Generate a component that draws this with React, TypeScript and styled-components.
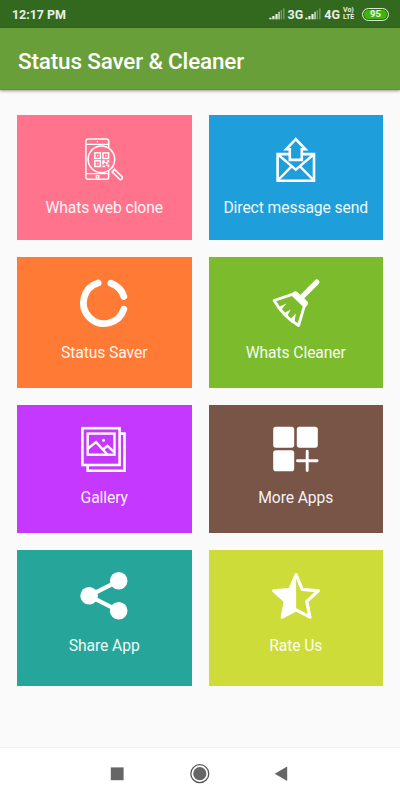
import React from "react";
import styled, { createGlobalStyle } from "styled-components";

const GlobalStyle = createGlobalStyle`
  * { box-sizing: border-box; }
  body {
    margin: 0;
    background: #fafafa;
    font-family: Roboto, "Liberation Sans", sans-serif;
  }
`;

const Screen = styled.div`
  width: 400px;
  height: 800px;
  display: flex;
  flex-direction: column;
  background: #fafafa;
  overflow: hidden;
`;

const StatusBar = styled.div`
  height: 28px;
  flex: none;
  display: flex;
  align-items: center;
  padding: 2px 11px 0 12px;
  background: #33691e;
  color: #e9f0e6;
  font-size: 12.5px;
  line-height: 14px;
  font-weight: 700;
`;

const Clock = styled.span`
  flex: 1;
  font-size: 12.5px;
  letter-spacing: -0.05px;
`;

const Network = styled.span`
  margin: 0 2px 0 3px;
`;

const SignalSvg = styled.svg`
  width: 16px;
  height: 12px;
  flex: none;
  margin-top: -2px;
`;

const Volte = styled.span`
  display: flex;
  flex-direction: column;
  width: 13px;
  margin: -2px 6px 0 1px;
  font-size: 7px;
  line-height: 7px;
`;

const VolteLine = styled.span`
  height: 7px;
  overflow: hidden;
  white-space: nowrap;
`;

const Battery = styled.span`
  width: 27px;
  height: 13px;
  display: flex;
  align-items: center;
  justify-content: center;
  margin-top: -2px;
  border: 1.5px solid #dcebd4;
  border-radius: 7px;
  background: #3fb50c;
  box-shadow: inset 0 0 0 1px #33691e;
  color: #f2fbee;
  font-size: 9.5px;
  line-height: 10px;
`;

const AppBar = styled.header`
  height: 62px;
  flex: none;
  display: flex;
  align-items: center;
  padding: 4px 18px 0;
  background: #689f38;
  border-bottom: 1px solid #5c9428;
  box-shadow: 0 1px 3px rgba(0, 0, 0, 0.4);
  color: #fff;
`;

const Title = styled.h1`
  margin: 0;
  font-size: 22.5px;
  line-height: 28px;
  font-weight: 500;
  letter-spacing: -0.17px;
  white-space: nowrap;
`;

const Grid = styled.main`
  flex: 1;
  display: grid;
  grid-template-columns: 1fr 1fr;
  grid-template-rows: 125.3px 131px 128px 136.5px;
  gap: 16.9px 17px;
  padding: 25px 17px 0;
`;

const Tile = styled.div<{ $color: string; $labelGap: number }>`
  display: flex;
  flex-direction: column;
  align-items: center;
  gap: ${(p) => p.$labelGap}px;
  padding-top: 15px;
  background: ${(p) => p.$color};
  color: #fff;
`;

const IconSvg = styled.svg`
  width: 60px;
  height: 60px;
  flex: none;
  display: block;
`;

const Label = styled.span`
  font-size: 15.7px;
  line-height: 20px;
  letter-spacing: -0.1px;
  white-space: nowrap;
  opacity: 0.93;
`;

const NavBar = styled.nav`
  height: 53px;
  flex: none;
  display: flex;
  align-items: center;
  justify-content: center;
  gap: 62px;
  border-top: 1px solid #f2f2f2;
  background: #fff;
`;

const NavSvg = styled.svg`
  width: 20px;
  height: 20px;
  display: block;
`;

const Signal = () => (
  <SignalSvg viewBox="0 0 16 12" fill="#e9f0e6">
    <rect x="0.3" y="9.7" width="2.2" height="1.6" />
    <rect x="3.3" y="8" width="2.2" height="3.3" />
    <rect x="6.4" y="6" width="2.2" height="5.3" />
    <rect x="9.4" y="3.8" width="1.3" height="7.5" />
    <rect x="11.6" y="2" width="1.5" height="9.3" opacity="0.35" />
    <rect x="14.1" y="0.3" width="1.5" height="11" opacity="0.35" />
  </SignalSvg>
);

const WebCloneIcon = () => (
  <IconSvg viewBox="0 0 60 60" fill="none" stroke="#fff" strokeWidth="1.5">
    <path d="M34.7 18V11.3a2.4 2.4 0 0 0-2.4-2.4h-18a2.4 2.4 0 0 0-2.4 2.4v35.6a2.4 2.4 0 0 0 2.4 2.4h18a2.4 2.4 0 0 0 2.4-2.4V41" />
    <path d="M11.9 14.4h22.8M11.9 43.7h22.8" strokeWidth="1.2" />
    <circle cx="23.4" cy="11.7" r="0.7" fill="#fff" stroke="none" />
    <rect x="22.2" y="45.6" width="2.6" height="2.2" strokeWidth="1.2" />
    <circle cx="27.4" cy="29.3" r="13.3" />
    <path d="M36.3 39.2l3-2.6M38.2 41.9l2.3-2.4 7.4 7a1.7 1.7 0 0 1-2.5 2.5l-7.2-7.1z" strokeWidth="1.6" />
    <g strokeWidth="1.5">
      <rect x="20.8" y="22.9" width="5.6" height="5.6" />
      <rect x="29" y="22.9" width="5.6" height="5.6" />
      <rect x="20.8" y="30.9" width="5.6" height="5.6" />
    </g>
    <g fill="#fff" stroke="none">
      <rect x="22.9" y="25" width="1.5" height="1.5" />
      <rect x="31.1" y="25" width="1.5" height="1.5" />
      <rect x="22.9" y="33" width="1.5" height="1.5" />
      <path d="M28.2 30.2h2.6v2h2v-2h2.5v2.3h-1.7v1.7h-2v-1.1h-1.8v1.4h-1.6zM28.4 35.6h3v1.7h-3zM32.2 34.4h3.1v2.9h-1.7v-1.5h-1.4z" />
    </g>
  </IconSvg>
);

const SendMessageIcon = () => (
  <IconSvg viewBox="0 0 60 60" fill="none" stroke="#fff" strokeWidth="2.6">
    <path d="M23 24.1H11.6v26.6H48V24.1H36.5" />
    <path d="M29.8 9.1L20.2 19.3h3.6v10.6h12V19.3h3.6z" />
    <path d="M12 24.5l17.8 15.2 17.8-15.2M12.2 50l13.4-13.6M47.4 50L34 36.4" strokeWidth="2.4" />
  </IconSvg>
);

const StatusIcon = () => (
  <IconSvg viewBox="0 0 60 60" fill="none" stroke="#fff" strokeWidth="6.8" strokeLinecap="round">
    <path d="M24.1 11.1A20.7 20.7 0 1 0 49.8 37.3" />
    <path d="M36.9 11.2A20.7 20.7 0 0 1 49.8 24.4" />
  </IconSvg>
);

const BroomIcon = () => (
  <IconSvg viewBox="0 0 60 60" fill="#fff">
    <path d="M50.8 10.1L34.5 26.4" stroke="#fff" strokeWidth="5.2" strokeLinecap="round" />
    <path d="M27.2 20.6q2.1-1.9 4.5.1l8.8 8.2q2 2.3.3 4.5-1.1 1.5-3.5 1.1L26 23.6z" stroke="#fff" strokeWidth="1" />
    <path d="M27 22.1L8.1 28.5Q17.4 44.7 32.6 53.5L38.4 33.8" fill="none" stroke="#fff" strokeWidth="2.8" strokeLinejoin="round" />
    <path d="M13.1 34.7l7.4-3.1-4.8 5.6zM18.4 41l6.2-3.6-3.3 6.5zM25 46.6l4.8-5-1.2 8z" />
  </IconSvg>
);

const GalleryIcon = () => (
  <IconSvg viewBox="0 0 60 60" fill="none" stroke="#fff" strokeWidth="2.6">
    <rect x="8.4" y="8.2" width="37.2" height="36.8" />
    <path d="M46 13.6h4.5v37.1H13.7V45.5" />
    <rect x="13.7" y="13.6" width="26.8" height="21.1" strokeWidth="2.4" />
    <path d="M14.3 28.3l7.8-6.2L33.6 34.7M28.9 29.5l4.6-3.7 6.4 6" strokeWidth="2.4" />
    <circle cx="29.5" cy="20.3" r="1.5" fill="#fff" stroke="none" />
  </IconSvg>
);

const MoreAppsIcon = () => (
  <IconSvg viewBox="0 0 60 60" fill="#fff">
    <rect x="7.2" y="6.8" width="21" height="21" rx="2.8" />
    <rect x="30.8" y="6.8" width="21" height="21" rx="2.8" />
    <rect x="7.2" y="30.2" width="21" height="21" rx="2.8" />
    <path d="M31.5 40.8h19.6M41.2 31.3v19.2" stroke="#fff" strokeWidth="2.9" strokeLinecap="round" />
  </IconSvg>
);

const ShareIcon = () => (
  <IconSvg viewBox="0 0 60 60" fill="#fff">
    <path d="M44.7 15.8L15.1 30.8l29.6 15" fill="none" stroke="#fff" strokeWidth="4.2" />
    <circle cx="15.1" cy="30.8" r="8.8" />
    <circle cx="44.7" cy="15.8" r="8.8" />
    <circle cx="44.7" cy="45.8" r="8.8" />
  </IconSvg>
);

const RateIcon = () => (
  <IconSvg viewBox="0 0 60 60">
    <path
      d="M30.1 9.8l6.1 14.5 16.2 1.5-11.6 10.6 3.2 15.8-13.9-7.3-13.9 7.3 3.2-15.8L7.7 25.8l16.2-1.5z"
      fill="none"
      stroke="#fff"
      strokeWidth="3.2"
      strokeLinejoin="round"
    />
    <path d="M30.1 9.8v35.1l-13.9 7.3 3.2-15.8L7.7 25.8l16.2-1.5z" fill="#fff" />
  </IconSvg>
);

const tiles = [
  { label: "Whats web clone", color: "#ff738d", labelGap: 8, Icon: WebCloneIcon },
  { label: "Direct message send", color: "#1e9fdc", labelGap: 8, Icon: SendMessageIcon },
  { label: "Status Saver", color: "#ff7a35", labelGap: 11, Icon: StatusIcon },
  { label: "Whats Cleaner", color: "#7cbc2c", labelGap: 11, Icon: BroomIcon },
  { label: "Gallery", color: "#c438ff", labelGap: 8, Icon: GalleryIcon },
  { label: "More Apps", color: "#795548", labelGap: 8, Icon: MoreAppsIcon },
  { label: "Share App", color: "#26a69a", labelGap: 11, Icon: ShareIcon },
  { label: "Rate Us", color: "#cddc39", labelGap: 11, Icon: RateIcon },
];

export default function App() {
  return (
    <Screen>
      <GlobalStyle />
      <StatusBar>
        <Clock>12:17 PM</Clock>
        <Signal />
        <Network>3G</Network>
        <Signal />
        <Network>4G</Network>
        <Volte>
          <VolteLine>Vo)</VolteLine>
          <VolteLine>LTE</VolteLine>
        </Volte>
        <Battery>95</Battery>
      </StatusBar>
      <AppBar>
        <Title>Status Saver &amp; Cleaner</Title>
      </AppBar>
      <Grid>
        {tiles.map(({ label, color, labelGap, Icon }) => (
          <Tile key={label} $color={color} $labelGap={labelGap}>
            <Icon />
            <Label>{label}</Label>
          </Tile>
        ))}
      </Grid>
      <NavBar>
        <NavSvg viewBox="0 0 20 20">
          <rect x="2.8" y="3.4" width="12.8" height="12.8" fill="#666" />
        </NavSvg>
        <NavSvg viewBox="0 0 20 20">
          <circle cx="9.8" cy="9.7" r="9" fill="none" stroke="#555" strokeWidth="1.3" />
          <circle cx="9.8" cy="9.7" r="6.6" fill="#666" />
        </NavSvg>
        <NavSvg viewBox="0 0 20 20">
          <path d="M2.7 9.8L15.2 2.6v14.5z" fill="#666" />
        </NavSvg>
      </NavBar>
    </Screen>
  );
}
